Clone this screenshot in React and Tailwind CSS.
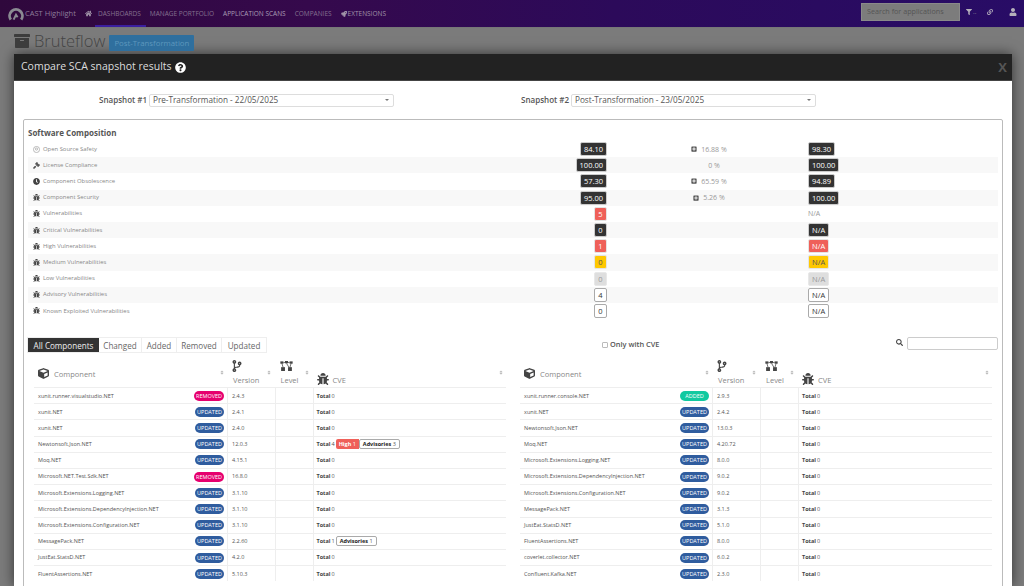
import { FaHome, FaRocket, FaBug, FaCube, FaGavel, FaClock, FaArchive, FaQuestionCircle, FaSearch, FaFilter, FaLink, FaUser, FaPlusSquare, FaCodeBranch, FaSort } from "react-icons/fa";

const font = { fontFamily: '"Open Sans", sans-serif' };

const metrics = [
  { icon: "os", label: "Open Source Safety", a: "84.10", diff: "16.88 %", b: "98.30" },
  { icon: "gavel", label: "License Compliance", a: "100.00", diff: "0 %", plain: true, b: "100.00" },
  { icon: "clock", label: "Component Obsolescence", a: "57.30", diff: "65.59 %", b: "94.89" },
  { icon: "bug", label: "Component Security", a: "95.00", diff: "5.26 %", b: "100.00" },
  { icon: "bug", label: "Vulnerabilities", a: "5", tone: "red", b: "N/A", bTone: "none" },
  { icon: "bug", label: "Critical Vulnerabilities", a: "0", tone: "dark", b: "N/A" },
  { icon: "bug", label: "High Vulnerabilities", a: "1", tone: "red", b: "N/A" },
  { icon: "bug", label: "Medium Vulnerabilities", a: "0", tone: "yellow", b: "N/A" },
  { icon: "bug", label: "Low Vulnerabilities", a: "0", tone: "gray", b: "N/A" },
  { icon: "bug", label: "Advisory Vulnerabilities", a: "4", tone: "white", b: "N/A" },
  { icon: "bug", label: "Known Exploited Vulnerabilities", a: "0", tone: "white", b: "N/A" },
];

const tones = {
  dark: "bg-[#333] text-white border-[#ccc]",
  red: "bg-[#ef6059] text-white border-[#e4e4e4]",
  yellow: "bg-[#ffc800] text-[#555] border-[#e4e4e4]",
  gray: "bg-[#dedede] text-[#999] border-[#e8e8e8]",
  white: "bg-white text-[#333] border-[#aaa]",
};

const left = [
  ["xunit.runner.visualstudio.NET", "REMOVED", "2.4.3"],
  ["xunit.NET", "UPDATED", "2.4.1"],
  ["xunit.NET", "UPDATED", "2.4.0"],
  ["Newtonsoft.Json.NET", "UPDATED", "12.0.3", 4, [["High", 1, "red"], ["Advisories", 3, "white"]]],
  ["Moq.NET", "UPDATED", "4.15.1"],
  ["Microsoft.NET.Test.Sdk.NET", "REMOVED", "16.8.0"],
  ["Microsoft.Extensions.Logging.NET", "UPDATED", "3.1.10"],
  ["Microsoft.Extensions.DependencyInjection.NET", "UPDATED", "3.1.10"],
  ["Microsoft.Extensions.Configuration.NET", "UPDATED", "3.1.10"],
  ["MessagePack.NET", "UPDATED", "2.2.60", 1, [["Advisories", 1, "white"]]],
  ["JustEat.StatsD.NET", "UPDATED", "4.2.0"],
  ["FluentAssertions.NET", "UPDATED", "5.10.3"],
];

const right = [
  ["xunit.runner.console.NET", "ADDED", "2.9.3"],
  ["xunit.NET", "UPDATED", "2.4.2"],
  ["Newtonsoft.Json.NET", "UPDATED", "13.0.3"],
  ["Moq.NET", "UPDATED", "4.20.72"],
  ["Microsoft.Extensions.Logging.NET", "UPDATED", "8.0.0"],
  ["Microsoft.Extensions.DependencyInjection.NET", "UPDATED", "9.0.2"],
  ["Microsoft.Extensions.Configuration.NET", "UPDATED", "9.0.2"],
  ["MessagePack.NET", "UPDATED", "3.1.3"],
  ["JustEat.StatsD.NET", "UPDATED", "5.1.0"],
  ["FluentAssertions.NET", "UPDATED", "8.0.0"],
  ["coverlet.collector.NET", "UPDATED", "6.0.2"],
  ["Confluent.Kafka.NET", "UPDATED", "2.3.0"],
];

const pills = {
  REMOVED: "bg-[#e6006e]",
  UPDATED: "bg-[#2f5c9e]",
  ADDED: "bg-[#11c9a0]",
};

function LevelIcon({ className }) {
  return (
    <svg viewBox="0 0 16 13" className={className} fill="currentColor">
      <rect x="0" y="0.500" width="4" height="3" />
      <rect x="6" y="0" width="4" height="3" />
      <rect x="12" y="0.500" width="4" height="3" />
      <rect x="1" y="8" width="5" height="5" />
      <rect x="10" y="8" width="5" height="5" />
      <path d="M2 3l1.500 5M14 3l-1.500 5M8 3l3 5M4 2h2M10 2h2" stroke="currentColor" strokeWidth="1" fill="none" />
    </svg>
  );
}

function MetricIcon({ type }) {
  if (type === "os") {
    return (
      <svg viewBox="0 0 16 16" className="w-[7px] h-[7px] text-[#999]" fill="none" stroke="currentColor" strokeWidth="1.500">
        <circle cx="8" cy="8" r="7" />
        <circle cx="8" cy="7" r="2.500" />
      </svg>
    );
  }
  if (type === "gavel") return <FaGavel className="w-[7px] h-[7px] text-[#555]" />;
  if (type === "clock") return <FaClock className="w-[7px] h-[7px] text-[#444]" />;
  return <FaBug className="w-[7px] h-[7px] text-[#444]" />;
}

function ValueBadge({ text, tone = "dark" }) {
  if (tone === "none") return <span className="text-[7px] text-[#999]">{text}</span>;
  return (
    <span className={`inline-block h-[14px] leading-[12px] px-[3px] min-w-[13px] text-center text-[7.500px] rounded-[2px] border ${tones[tone]}`}>
      {text}
    </span>
  );
}

function SortHandle({ className = "" }) {
  return <FaSort className={`w-[4px] h-[5px] text-[#bbb] ${className}`} />;
}

function CveCell({ total = 0, badges = [] }) {
  return (
    <div className="flex items-center pl-[3px] text-[5.500px] text-[#555]">
      <b className="text-[#444]">Total</b>
      <span className="ml-[1px]">{total}</span>
      <div className="flex ml-[1px]">
        {badges.map(([name, count, tone]) => (
          <span
            key={name}
            className={
              tone === "red"
                ? "h-[10px] leading-[10px] px-[3px] bg-[#ef6059] text-white rounded-l-[2px]"
                : "h-[10px] leading-[8px] px-[3px] bg-white text-[#555] border border-[#aaa] rounded-[2px]"
            }
          >
            <b className={tone === "red" ? "" : "text-[#222]"}>{name}</b> {count}
          </span>
        ))}
      </div>
    </div>
  );
}

function CompareTable({ rows, cols, title }) {
  return (
    <div className="w-[472px]">
      <div className="h-[28px] flex text-[7.500px] leading-[10px] text-[#888]">
        <div className="relative flex items-center pt-[1px]" style={{ width: cols[0] }}>
          <FaCube className="w-[11px] h-[11px] ml-[4px] text-[#444]" />
          <span className="ml-[5px] mt-[1px]">{title}</span>
          <SortHandle className="absolute right-[4px] top-[11px]" />
        </div>
        <div className="relative pl-[5px]" style={{ width: cols[1] }}>
          <FaCodeBranch className="w-[10px] h-[12px] ml-[-1px] mt-[1px] text-[#444]" />
          <div className="mt-[3px]">Version</div>
          <SortHandle className="absolute right-[5px] top-[11px]" />
        </div>
        <div className="relative pl-[5px]" style={{ width: cols[2] }}>
          <LevelIcon className="w-[13px] h-[10px] mt-[2px] ml-[-1px] text-[#444]" />
          <div className="mt-[4px]">Level</div>
          <SortHandle className="absolute right-[5px] top-[11px]" />
        </div>
        <div className="relative flex items-end flex-1 pb-[2px] pl-[3px]">
          <FaBug className="w-[12px] h-[12px] text-[#444]" />
          <span className="ml-[4px]">CVE</span>
          <SortHandle className="absolute right-[3px] top-[11px]" />
        </div>
      </div>
      {rows.map(([name, status, version, total, badges], i) => (
        <div key={i} className="flex h-[16.200px] items-center border-t border-[#eee] text-[5.500px] text-[#555]">
          <div className="h-full flex items-center justify-between pl-[4px] pr-[3px] border-r border-[#eee]" style={{ width: cols[0] }}>
            <span>{name}</span>
            <span className={`h-[10px] leading-[10px] px-[2px] min-w-[29px] text-center rounded-full text-[5.500px] text-white ${pills[status]}`}>
              {status}
            </span>
          </div>
          <div className="h-full flex items-center pl-[4px] border-r border-[#eee]" style={{ width: cols[1] }}>
            {version}
          </div>
          <div className="h-full border-r border-[#eee]" style={{ width: cols[2] }} />
          <div className="flex-1">
            <CveCell total={total} badges={badges} />
          </div>
        </div>
      ))}
    </div>
  );
}

function SnapshotSelect({ label, value, labelWidth }) {
  return (
    <div className="flex items-center">
      <label className="text-[8px] font-semibold text-[#555] text-right mr-[2px]" style={{ width: labelWidth }}>
        {label}
      </label>
      <div className="w-[245px] h-[13px] flex items-center justify-between px-[3px] bg-white border border-[#ddd] rounded-[2px] text-[8.200px] text-[#555]">
        <span>{value}</span>
        <span className="w-0 h-0 border-x-[2px] border-x-transparent border-t-[2px] border-t-[#777] mr-[1px]" />
      </div>
    </div>
  );
}

export default function App() {
  return (
    <div style={font} className="w-[1024px] h-[586px] overflow-hidden bg-[#7b7b7b]">
      {/* dimmed top bar */}
      <nav className="relative h-[28px] flex items-center bg-[linear-gradient(90deg,#2f083c_0%,#35094c_30%,#2c0a5a_60%,#280c66_100%)] border-b border-[#777] text-[6.500px] text-[#84708f] whitespace-nowrap">
        <svg viewBox="0 0 20 20" className="w-[16px] h-[16px] ml-[8px] text-[#8a8a92]" fill="none" stroke="currentColor">
          <path d="M3.500 17A8 8 0 1 1 16.500 17" strokeWidth="3.500" />
          <path d="M7 17l3-6 2 3" strokeWidth="2.500" />
        </svg>
        <span className="ml-[1px] text-[7.500px] w-[48px] text-[#8d7d9a]">CAST Highlight</span>
        <FaHome className="w-[7px] h-[7px] ml-[12px] text-[#a093a8]" />
        <span className="ml-[6px]">DASHBOARDS</span>
        <span className="ml-[9px]">MANAGE PORTFOLIO</span>
        <span className="ml-[9px] text-[#a99cb5]">APPLICATION SCANS</span>
        <span className="ml-[9px]">COMPANIES</span>
        <FaRocket className="w-[6px] h-[6px] ml-[9px] text-[#a093a8]" />
        <span className="ml-[1px] text-[#a093a8]">EXTENSIONS</span>
        <span className="absolute left-[95px] bottom-0 w-[51px] h-[2px] bg-[#3b1fa0]" />
        <div className="ml-auto flex items-center mb-[4px]">
          <div className="w-[99px] h-[18px] flex items-center px-[5px] bg-[#7c7c7c] border border-[#8a8a8a] text-[7.200px] text-[#555]">
            Search for applications
          </div>
          <FaFilter className="w-[6px] h-[6px] ml-[6px] text-[#b5b0bb]" />
          <span className="w-[15px] pl-[1px] text-[#7f7490]">..</span>
          <FaLink className="w-[6px] h-[6px] text-[#a8a0b5]" />
          <FaUser className="w-[8px] h-[8px] ml-[16px] mr-[7px] text-[#b5b0bb]" />
        </div>
      </nav>

      <header className="h-[26px] flex items-center pl-[14px] text-[#3a3a3a]">
        <FaArchive className="w-[16px] h-[16px] text-[#3d3d3d]" />
        <h1 className="ml-[4px] text-[16.500px] font-light text-[#444]">Bruteflow</h1>
        <span className="ml-[4px] h-[16px] mt-[3px] leading-[16px] px-[5px] bg-[#2f6f9e] text-[#5d97bd] text-[7.800px] rounded-[1px]">Post-Transformation</span>
      </header>

      <section className="w-[998px] h-[532px] ml-[14px] bg-white shadow-[0_0_12px_rgba(0,0,0,0.6)] overflow-hidden">
        <div className="h-[27px] flex items-center justify-between pl-[7px] pr-[5px] bg-[#222] border-b border-[#444]">
          <div className="flex items-center text-[10.500px] text-[#ddd]">
            Compare SCA snapshot results
            <FaQuestionCircle className="w-[11px] h-[11px] ml-[3px] text-white" />
          </div>
          <span className="text-[13px] font-bold leading-none text-[#555]">X</span>
        </div>

        <div className="flex h-[38px] items-center">
          <SnapshotSelect label="Snapshot #1" value="Pre-Transformation - 22/05/2025" labelWidth="133px" />
          <SnapshotSelect label="Snapshot #2" value="Post-Transformation - 23/05/2025" labelWidth="175px" />
        </div>

        <div className="w-[980px] h-[470px] ml-[9px] px-[4px] border border-[#bbb] rounded-[2px]">
          <h2 className="h-[21px] pt-[7px] text-[8px] leading-[11px] font-bold text-[#555]">Software Composition</h2>

          {metrics.map((m, i) => (
            <div
              key={m.label}
              className={`grid grid-cols-[579px_201px_1fr] items-center h-[16.200px] leading-none ${i % 2 ? "bg-[#f8f8f8]" : ""}`}
            >
              <div className="flex items-center justify-between">
                <span className="flex items-center pl-[5px] text-[5.900px] text-[#888]">
                  <MetricIcon type={m.icon} />
                  <span className="ml-[3px] pt-[1px]">{m.label}</span>
                </span>
                <ValueBadge text={m.a} tone={m.tone} />
              </div>
              <div className="flex items-center justify-center pl-[13px] text-[7px] text-[#999]">
                {m.diff && !m.plain && <FaPlusSquare className="w-[6px] h-[6px] mr-[4px] text-[#555]" />}
                {m.diff}
                {m.diff && !m.plain && <span className="w-[10px]" />}
              </div>
              <div className="flex items-center">
                <ValueBadge text={m.b} tone={m.bTone || (i >= 5 ? m.tone : "dark")} />
              </div>
            </div>
          ))}

          <div className="h-[17px] mt-[17px] flex items-center">
            <div className="flex h-[16px] ml-[-1px] text-[8.100px] text-[#666] border border-[#eee]">
              <span className="w-[71px] leading-[15px] text-center bg-[#333] text-[#eee]">All Components</span>
              <span className="w-[43px] leading-[15px] text-center border-r border-[#eee]">Changed</span>
              <span className="w-[35px] leading-[15px] text-center border-r border-[#eee]">Added</span>
              <span className="w-[45px] leading-[15px] text-center border-r border-[#eee]">Removed</span>
              <span className="w-[44px] leading-[15px] text-center">Updated</span>
            </div>
            <label className="ml-[335px] flex items-center text-[7.400px] font-semibold text-[#555]">
              <span className="w-[6px] h-[6px] mr-[2px] border border-[#bbb] rounded-[1px]" />
              Only with CVE
            </label>
            <FaSearch className="ml-auto mb-[4px] w-[7px] h-[7px] text-[#444]" />
            <span className="ml-[4px] mb-[3px] w-[91px] h-[13px] bg-white border border-[#ccc] rounded-[2px]" />
          </div>

          <div className="flex gap-[14px] pl-[6px] mt-[6px]">
            <CompareTable rows={left} cols={[194, 47.5, 38]} title="Component" />
            <CompareTable rows={right} cols={[193, 48, 38]} title="Component" />
          </div>
        </div>
      </section>
    </div>
  );
}
